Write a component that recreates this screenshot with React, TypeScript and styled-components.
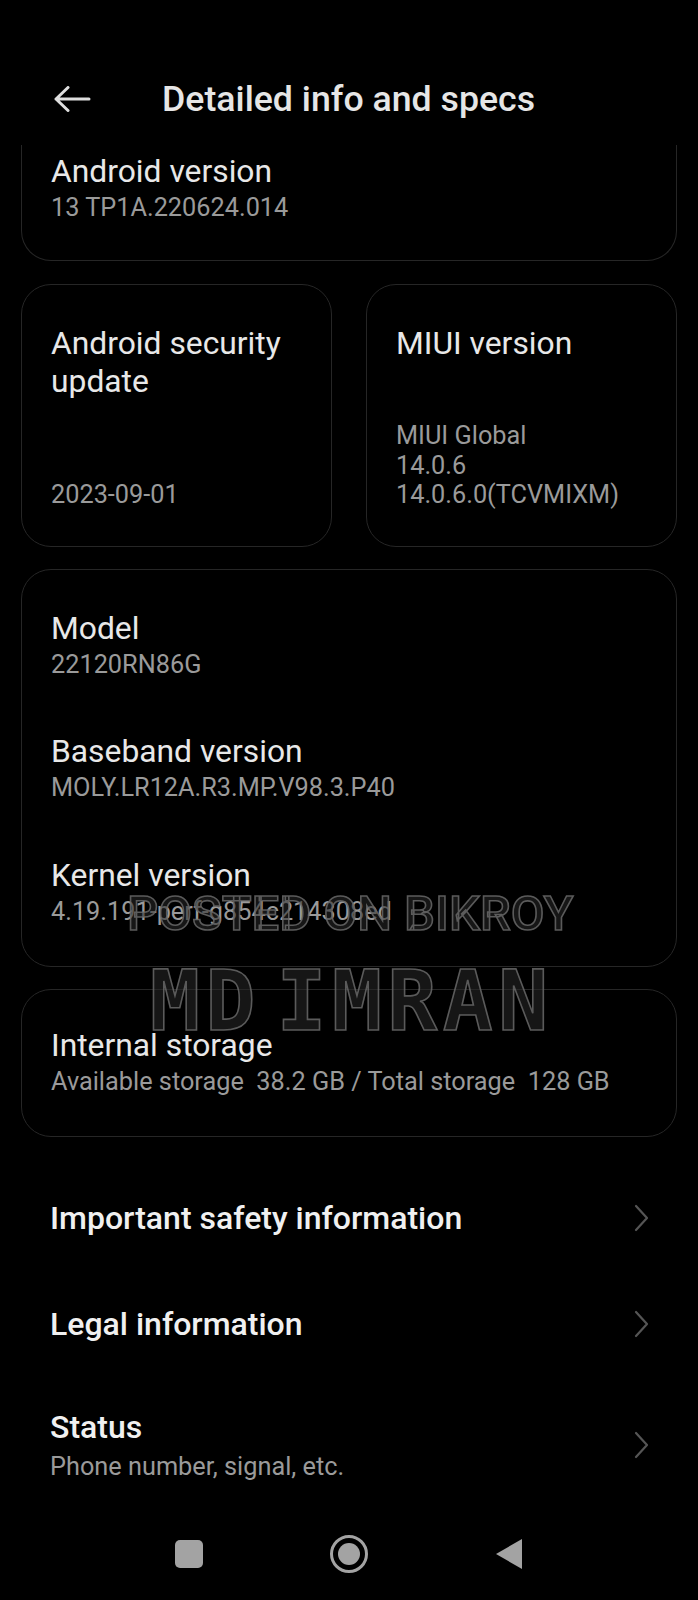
import * as React from "react";
import styled, { createGlobalStyle } from "styled-components";

const GlobalStyle = createGlobalStyle`
    html, body {
        margin: 0;
        padding: 0;
        background: #000;
    }
    body {
        font-family: Roboto, "Noto Sans", sans-serif;
        -webkit-font-smoothing: antialiased;
    }
`;

const Screen = styled.div`
    position: relative;
    width: 698px;
    height: 1600px;
    overflow: hidden;
    background: #000;
    color: #e8e8e8;
`;

const Header = styled.header`
    height: 145px;
    display: flex;
    align-items: center;
    padding: 52px 0 0 53px;
    box-sizing: border-box;
    gap: 71px;
`;

const Title = styled.h1`
    margin: 0;
    font-size: 35.7px;
    font-weight: 500;
    color: #e6e6e6;
`;

const Content = styled.div`
    padding: 0 21px;
    display: flex;
    flex-direction: column;
`;

const Card = styled.section<{ $clipped?: boolean }>`
    border: 1px solid #262626;
    border-radius: 30px;
    ${({ $clipped }) =>
        $clipped &&
        `
        border-top: none;
        border-top-left-radius: 0;
        border-top-right-radius: 0;
    `}
    box-sizing: border-box;
    padding: 0 28px 0 29px;
    display: flex;
    flex-direction: column;
`;

const Row = styled.div`
    display: grid;
    grid-template-columns: 1fr 1fr;
    gap: 34px;
    margin: 23px 0 22px;
`;

const TileCard = styled(Card)`
    height: 263px;
    padding-top: 39px;
    padding-bottom: 36px;
    justify-content: space-between;
`;

const Label = styled.div`
    font-size: 31.8px;
    line-height: 38px;
    color: #e8e8e8;
`;

const Value = styled.div`
    font-size: 25.3px;
    line-height: 29.5px;
    color: #9a9a9a;
`;

const Item = styled.div<{ $gap?: number }>`
    display: flex;
    flex-direction: column;
    gap: 3px;
    margin-top: ${({ $gap }) => $gap ?? 0}px;
`;

const List = styled.div`
    margin-top: 28px;
    display: flex;
    flex-direction: column;
`;

const ListRow = styled.div<{ $multi?: boolean }>`
    display: flex;
    align-items: center;
    justify-content: space-between;
    padding: ${({ $multi }) => ($multi ? "32px" : "35px")} 48px 35px 50px;
`;

const ListText = styled.div`
    display: flex;
    flex-direction: column;
    gap: 7px;
`;

const ListTitle = styled.div`
    font-size: 32px;
    line-height: 36px;
    font-weight: 500;
    color: #f0f0f0;
`;

const NavBar = styled.nav`
    display: flex;
    justify-content: center;
    align-items: center;
    gap: 100px;
    height: 76px;
`;

const NavSlot = styled.div`
    width: 60px;
    display: flex;
    justify-content: center;
    align-items: center;
`;

const RecentsKey = styled.div`
    width: 28px;
    height: 28px;
    border-radius: 5px;
    background: #a3a3a3;
`;

const HomeKey = styled.div`
    width: 38px;
    height: 38px;
    border-radius: 50%;
    border: 3px solid #a3a3a3;
    box-sizing: border-box;
    display: grid;
    place-items: center;
    &::after {
        content: "";
        width: 22px;
        height: 22px;
        border-radius: 50%;
        background: #a3a3a3;
    }
`;

const Watermark = styled.div<{ $mono?: boolean }>`
    position: absolute;
    white-space: nowrap;
    pointer-events: none;
    color: rgba(40, 40, 40, 0.55);
    -webkit-text-stroke: 1.6px rgba(105, 105, 105, 0.85);
    font-family: ${({ $mono }) =>
        $mono ? `"DejaVu Sans Mono", monospace` : `Roboto, sans-serif`};
    font-weight: ${({ $mono }) => ($mono ? 700 : 500)};
    letter-spacing: ${({ $mono }) => ($mono ? "5.5px" : "0")};
    word-spacing: ${({ $mono }) => ($mono ? "-40px" : "0")};
`;

const BackArrow = () => (
    <svg width="38" height="26" viewBox="0 0 38 26" fill="none">
        <path
            d="M3 13 H36 M15 1.5 L3 13 L15 24.5"
            stroke="#dedede"
            strokeWidth="3"
            strokeLinecap="round"
            strokeLinejoin="round"
        />
    </svg>
);

const Chevron = () => (
    <svg width="16" height="28" viewBox="0 0 16 28" fill="none">
        <path
            d="M2 2 L13 14 L2 26"
            stroke="#555"
            strokeWidth="2.2"
            strokeLinecap="round"
            strokeLinejoin="round"
        />
    </svg>
);

const BackKey = () => (
    <svg width="28" height="32" viewBox="0 0 28 32">
        <path d="M27 1 V31 L1 16 Z" fill="#a3a3a3" />
    </svg>
);

const specs = [
    { label: "Model", value: "22120RN86G" },
    { label: "Baseband version", value: "MOLY.LR12A.R3.MP.V98.3.P40" },
    { label: "Kernel version", value: "4.19.191-perf-g854c214308ed" },
];

const links = [
    { title: "Important safety information" },
    { title: "Legal information" },
    { title: "Status", sub: "Phone number, signal, etc." },
];

export default function App() {
    return (
        <Screen>
            <GlobalStyle />
            <Header>
                <BackArrow />
                <Title>Detailed info and specs</Title>
            </Header>
            <Content>
                <Card $clipped style={{ paddingTop: 7, paddingBottom: 37 }}>
                    <Item>
                        <Label>Android version</Label>
                        <Value>13 TP1A.220624.014</Value>
                    </Item>
                </Card>
                <Row>
                    <TileCard>
                        <Label>
                            Android security
                            <br />
                            update
                        </Label>
                        <Value>2023-09-01</Value>
                    </TileCard>
                    <TileCard>
                        <Label>MIUI version</Label>
                        <div>
                            <Value>MIUI Global</Value>
                            <Value>14.0.6</Value>
                            <Value>14.0.6.0(TCVMIXM)</Value>
                        </div>
                    </TileCard>
                </Row>
                <Card style={{ paddingTop: 39, paddingBottom: 40 }}>
                    {specs.map((s, i) => (
                        <Item key={s.label} $gap={i ? 53 : 0}>
                            <Label>{s.label}</Label>
                            <Value>{s.value}</Value>
                        </Item>
                    ))}
                </Card>
                <Card
                    style={{ marginTop: 22, paddingTop: 36, paddingBottom: 39 }}
                >
                    <Item>
                        <Label>Internal storage</Label>
                        <Value>
                            Available storage&nbsp; 38.2 GB / Total storage&nbsp;
                            128 GB
                        </Value>
                    </Item>
                </Card>
            </Content>
            <List>
                {links.map((l) => (
                    <ListRow key={l.title} $multi={!!l.sub}>
                        <ListText>
                            <ListTitle>{l.title}</ListTitle>
                            {l.sub && <Value>{l.sub}</Value>}
                        </ListText>
                        <Chevron />
                    </ListRow>
                ))}
            </List>
            <NavBar>
                <NavSlot>
                    <RecentsKey />
                </NavSlot>
                <NavSlot>
                    <HomeKey />
                </NavSlot>
                <NavSlot>
                    <BackKey />
                </NavSlot>
            </NavBar>
            <Watermark style={{ left: 127, top: 885, fontSize: 49 }}>
                POSTED ON BIKROY
            </Watermark>
            <Watermark $mono style={{ left: 150, top: 953, fontSize: 83 }}>
                MD IMRAN
            </Watermark>
        </Screen>
    );
}
